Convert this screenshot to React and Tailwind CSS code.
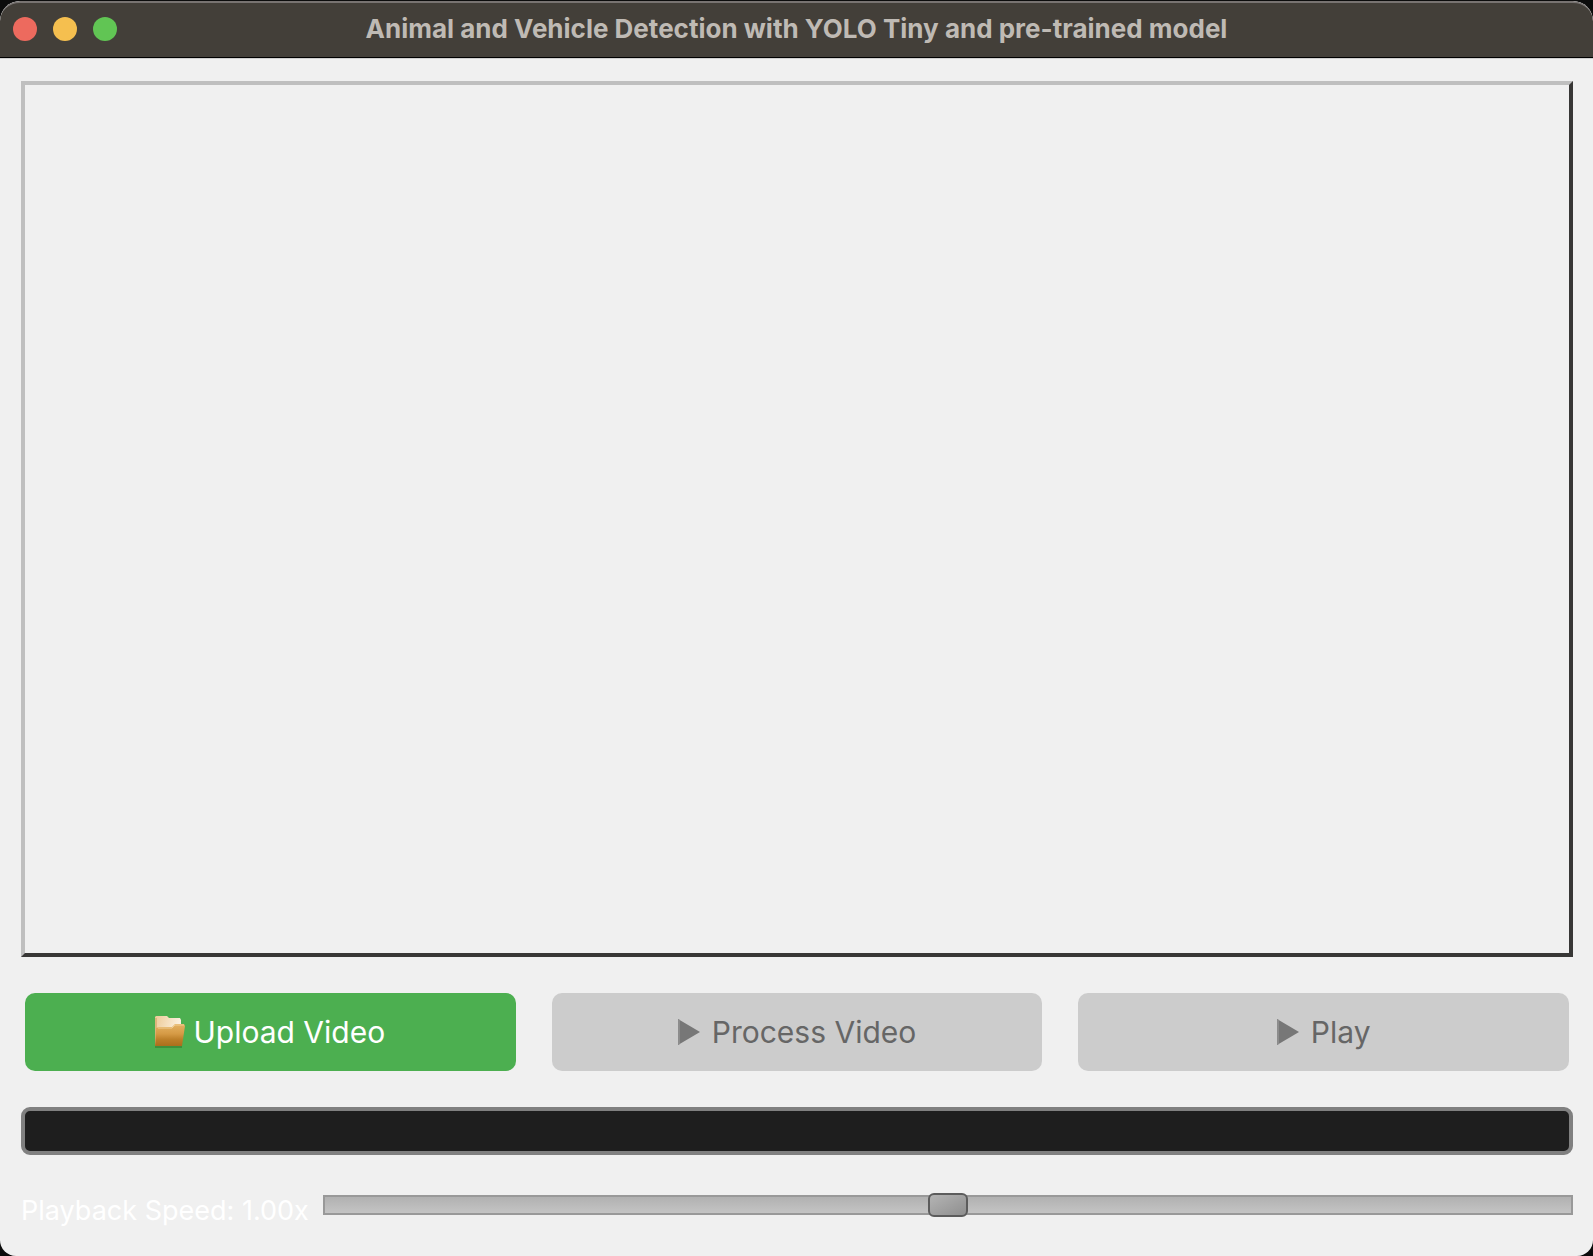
import { useState } from "react";

function FolderIcon() {
  return (
    <svg width="30" height="32" viewBox="0 0 30 32" aria-hidden="true">
      <defs>
        <linearGradient id="folderBack" x1="0" y1="0" x2="1" y2="0.3">
          <stop offset="0" stopColor="#ecca96" />
          <stop offset="0.5" stopColor="#f5dfbd" />
          <stop offset="1" stopColor="#fbf2e4" />
        </linearGradient>
        <linearGradient id="folderFront" x1="0" y1="0" x2="0" y2="1">
          <stop offset="0" stopColor="#e5b264" />
          <stop offset="0.45" stopColor="#d59a45" />
          <stop offset="0.7" stopColor="#bc7f29" />
          <stop offset="1" stopColor="#ab6f1c" />
        </linearGradient>
      </defs>
      <path d="M0 30h27v2H0z" fill="#3f8f3c" />
      <path d="M0 1l1-1h11l2 2h11l1 2v26H0z" fill="url(#folderBack)" />
      <path d="M0 2h2v10l-2 14z" fill="#dcb57c" />
      <path d="M0 30l1-18 3-1h13l3-3h9l1 2-3 20z" fill="url(#folderFront)" />
      <path d="M3 12h14l3-3h9" fill="none" stroke="#efcd92" strokeWidth="1" />
    </svg>
  );
}

function PlayIcon() {
  return (
    <svg width="22" height="26" viewBox="0 0 22 26" aria-hidden="true">
      <path d="M0 0l22 13L0 26z" fill="#777777" />
      <path d="M0 0l2 1v24l-2 1z" fill="#8c8c8c" />
    </svg>
  );
}

const buttonBase =
  "flex h-[78px] flex-1 items-center justify-center rounded-[10px] text-[30px] leading-10";

export default function App() {
  const [speed, setSpeed] = useState(100);

  return (
    <div className="min-h-screen bg-[#0c0c0c] pt-px font-['Inter',sans-serif]">
      <div className="flex min-h-[calc(100vh-1px)] flex-col overflow-hidden rounded-t-[20px] rounded-b-[16px] bg-[#f0f0f0]">
        <header className="grid h-[57px] shrink-0 grid-cols-[1fr_auto_1fr] items-center rounded-t-[20px] border-t-2 border-b border-t-[#787371] border-b-black bg-[#433f39] px-[13px] pb-0.5">
          <div className="flex gap-4">
            <button aria-label="Close" className="size-6 rounded-full bg-[#ed6a5e]" />
            <button aria-label="Minimize" className="size-6 rounded-full bg-[#f5bf4f]" />
            <button aria-label="Zoom" className="size-6 rounded-full bg-[#61c554]" />
          </div>
          <h1 className="text-[26px] leading-8 font-bold text-[#bfbab4]">
            Animal and Vehicle Detection with YOLO Tiny and pre-trained model
          </h1>
        </header>

        <main className="flex flex-1 flex-col border-t border-[#cfcfcf] pt-[22px] pr-5 pb-[29px] pl-[21px]">
          <section
            aria-label="Video preview"
            className="flex-1 border-4 border-t-[#bfbfbf] border-r-[#383736] border-b-[#383736] border-l-[#bfbfbf]"
          />

          <div className="mt-9 flex gap-9 px-1">
            <button className={`${buttonBase} gap-2 bg-[#4caf50] text-white`}>
              <FolderIcon />
              Upload Video
            </button>
            <button disabled className={`${buttonBase} gap-3 bg-[#cccccc] text-[#666666]`}>
              <PlayIcon />
              Process Video
            </button>
            <button disabled className={`${buttonBase} gap-3 bg-[#cccccc] text-[#666666]`}>
              <PlayIcon />
              Play
            </button>
          </div>

          <div
            role="progressbar"
            aria-label="Processing progress"
            aria-valuenow={0}
            className="mt-9 h-12 shrink-0 rounded-[9px] border-4 border-[#808080] bg-[#1e1e1e]"
          />

          <div className="mt-[38px] flex items-start gap-3.5">
            <label htmlFor="speed" className="pt-0.5 text-[27px] leading-8 whitespace-nowrap text-white">
              Playback Speed: {(speed / 100).toFixed(2)}x
            </label>
            <input
              id="speed"
              type="range"
              min="50"
              max="150"
              value={speed}
              onChange={(e) => setSpeed(Number(e.target.value))}
              className="h-6 min-w-0 flex-1 appearance-none bg-transparent [&::-webkit-slider-runnable-track]:h-5 [&::-webkit-slider-runnable-track]:border-2 [&::-webkit-slider-runnable-track]:border-[#999999] [&::-webkit-slider-runnable-track]:bg-linear-to-b [&::-webkit-slider-runnable-track]:from-[#b1b1b1] [&::-webkit-slider-runnable-track]:to-[#c4c4c4] [&::-webkit-slider-thumb]:-mt-1 [&::-webkit-slider-thumb]:h-6 [&::-webkit-slider-thumb]:w-10 [&::-webkit-slider-thumb]:appearance-none [&::-webkit-slider-thumb]:rounded-md [&::-webkit-slider-thumb]:border-2 [&::-webkit-slider-thumb]:border-[#5c5c5c] [&::-webkit-slider-thumb]:bg-linear-to-br [&::-webkit-slider-thumb]:from-[#b4b4b4] [&::-webkit-slider-thumb]:to-[#8f8f8f]"
            />
          </div>
        </main>
      </div>
    </div>
  );
}
